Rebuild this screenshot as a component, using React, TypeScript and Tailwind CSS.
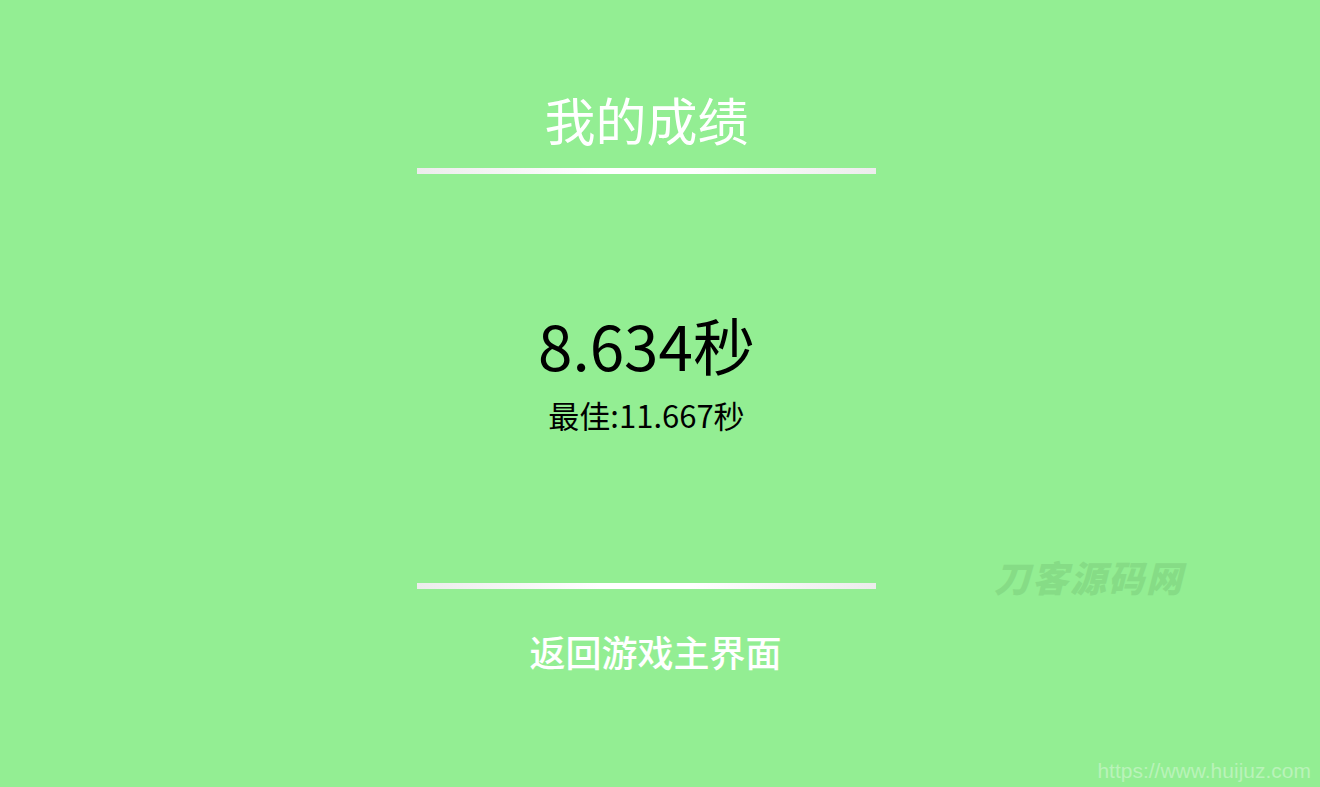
import React from "react";

const font = { fontFamily: '"Noto Sans CJK SC", "Noto Sans", sans-serif' };

function Line() {
  return (
    <div className="h-[6px] w-full bg-[linear-gradient(to_right,#ececec,#ffffff_40%,#ffffff_60%,#ececec)]" />
  );
}

export default function App() {
  return (
    <div
      className="relative h-[787px] w-[1320px] overflow-hidden bg-[#93ee93]"
      style={font}
    >
      <div className="ml-[417px] flex w-[459px] flex-col items-center pt-[86px]">
        <div className="text-[51px] leading-[66px] text-white">我的成绩</div>
        <div className="mt-[16px] w-full">
          <Line />
        </div>
        <div className="mt-[130px] text-[62px] leading-[80px] text-black">8.634秒</div>
        <div className="mt-[10px] text-[31px] leading-[42px] text-black">最佳:11.667秒</div>
        <div className="mt-[147px] w-full">
          <Line />
        </div>
        <div className="mt-[36px] pl-[18px] text-[36px] font-medium leading-[52px] text-white">
          返回游戏主界面
        </div>
      </div>
      <div className="absolute left-[994px] top-[552px] text-[36px] font-black italic leading-[48px] tracking-[2px] text-[#86dc86]">
        刀客源码网
      </div>
      <div
        className="absolute right-[9px] bottom-[3px] text-[21px] leading-[26px] text-[#b9f3b9]"
        style={{ fontFamily: '"Liberation Sans", Arial, sans-serif' }}
      >
        https://www.huijuz.com
      </div>
    </div>
  );
}
